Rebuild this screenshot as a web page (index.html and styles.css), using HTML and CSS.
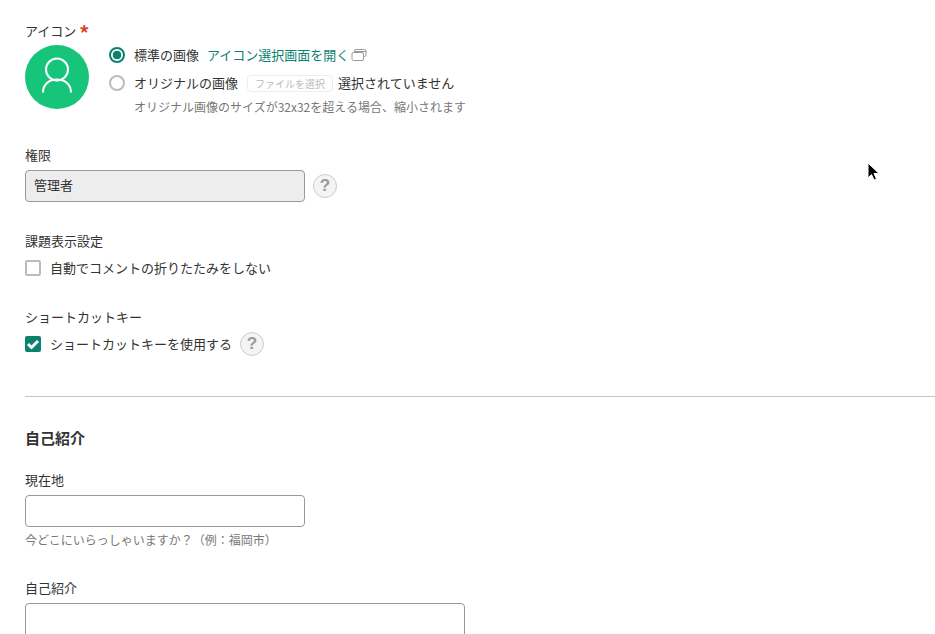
FILE: index.html
```html
<!DOCTYPE html>
<html lang="ja">
<head>
    <meta charset="UTF-8">
    <title>個人設定</title>
    <link rel="stylesheet" href="styles.css">
</head>
<body>
    <div class="settings">
        <section class="field field-icon">
            <div class="label label-icon">アイコン <span class="required">*</span></div>
            <div class="icon-row">
                <div class="avatar">
                    <svg width="64" height="64" viewBox="0 0 64 64" fill="none" stroke="#fff" stroke-width="2">
                        <circle cx="32" cy="24.5" r="11"/>
                        <path d="M18 47.5c0-8 6-13 14-13s14 5 14 13"/>
                    </svg>
                </div>
                <div class="icon-options">
                    <div class="radio-line">
                        <span class="radio checked"></span>
                        <span>標準の画像</span>
                        <a class="link">アイコン選択画面を開く</a>
                        <svg class="window-icon" width="16" height="12" viewBox="0 0 16 12" fill="none" stroke="#999">
                            <path d="M3.500 3V2A1.500 1.500 0 0 1 5 .5h8.500A1.500 1.500 0 0 1 15 2v4a1.500 1.500 0 0 1-1.500 1.500h-1"/>
                            <path d="M3.500 2.500H15"/>
                            <rect x="1" y="3.500" width="11.500" height="8" rx="1.500"/>
                        </svg>
                    </div>
                    <div class="radio-line">
                        <span class="radio"></span>
                        <span>オリジナルの画像</span>
                        <span class="file-button">ファイルを選択</span>
                        <span class="file-name">選択されていません</span>
                    </div>
                    <div class="note icon-note">オリジナル画像のサイズが32x32を超える場合、縮小されます</div>
                </div>
            </div>
        </section>

        <section class="field field-role">
            <div class="label">権限</div>
            <div class="with-help">
                <div class="input input-disabled">管理者</div>
                <span class="help">?</span>
            </div>
        </section>

        <section class="field field-issue">
            <div class="label">課題表示設定</div>
            <div class="check-line">
                <span class="checkbox"></span>
                <span>自動でコメントの折りたたみをしない</span>
            </div>
        </section>

        <section class="field field-shortcut">
            <div class="label">ショートカットキー</div>
            <div class="check-line">
                <span class="checkbox checked">
                    <svg width="16" height="16" viewBox="0 0 16 16" fill="none" stroke="#fff" stroke-width="3">
                        <path d="M3 8l3.500 3.500L13 5"/>
                    </svg>
                </span>
                <span>ショートカットキーを使用する</span>
                <span class="help">?</span>
            </div>
        </section>

        <hr class="divider">

        <h2 class="heading">自己紹介</h2>

        <section class="field field-location">
            <div class="label">現在地</div>
            <div class="input"></div>
            <div class="note location-note">今どこにいらっしゃいますか？（例：福岡市）</div>
        </section>

        <section class="field field-bio">
            <div class="label">自己紹介</div>
            <div class="textarea"></div>
        </section>
    </div>

    <svg class="cursor" width="14" height="20" viewBox="0 0 14 20">
        <path d="M1 1v15l3.500-3.500 2.500 5.500 2.500-1-2.500-5.500H12z" fill="#000" stroke="#fff" stroke-width="1"/>
    </svg>
</body>
</html>
```

FILE: styles.css
```css
* {
    margin: 0;
    padding: 0;
    box-sizing: border-box;
}

html, body {
    height: 634px;
    overflow: hidden;
}

body {
    background: #fff;
    color: #333;
    font-family: "Noto Sans CJK JP", "Noto Sans", sans-serif;
    font-size: 13px;
    line-height: 20px;
}

.settings {
    padding: 18px 0 0 25px;
}

.label {
    height: 20px;
    margin-bottom: 4px;
    line-height: 18px;
}

.label-icon {
    margin-bottom: 7px;
    line-height: 25px;
}

.required {
    color: #e5401f;
    font-size: 20px;
    line-height: 0;
    font-weight: 700;
    vertical-align: -5px;
}

.icon-row {
    display: flex;
    gap: 20px;
}

.avatar {
    width: 64px;
    height: 64px;
    border-radius: 50%;
    background: #17c57a;
}

.icon-options {
    margin-top: -4px;
}

.radio-line {
    display: flex;
    align-items: center;
    height: 28px;
}

.radio {
    width: 16px;
    height: 16px;
    margin-right: 9px;
    border: 2px solid #bbb;
    border-radius: 50%;
    background: #fff;
}

.radio.checked {
    border-color: #0b8170;
    background: radial-gradient(circle, #0b8170 0 4px, #fff 4.600px);
}

.link {
    margin-left: 8px;
    color: #0b8170;
}

.window-icon {
    margin-left: 2px;
}

.file-button {
    margin: 0 5px 0 9px;
    padding: 0 7px;
    height: 17px;
    border: 1px solid #eee;
    border-radius: 4px;
    color: #bbb;
    font-size: 10px;
    line-height: 16px;
}

.note {
    color: #777;
    font-size: 12px;
}

.icon-note {
    margin: 0 0 0 25px;
}

.field-role {
    margin-top: 29px;
}

.with-help {
    display: flex;
    align-items: center;
    gap: 8px;
}

.input {
    width: 280px;
    height: 32px;
    padding: 0 8px;
    border: 1px solid #999;
    border-radius: 4px;
    background: #fff;
    line-height: 28px;
}

.input-disabled {
    background: #ededed;
}

.help {
    display: flex;
    justify-content: center;
    align-items: center;
    width: 24px;
    height: 24px;
    border: 1px solid #ccc;
    border-radius: 50%;
    background: #f4f4f4;
    color: #999;
    font-family: "Liberation Sans", sans-serif;
    font-size: 17px;
    font-weight: 700;
}

.field-issue {
    margin-top: 30px;
}

.check-line {
    display: flex;
    align-items: center;
    height: 24px;
}

.checkbox {
    width: 16px;
    height: 16px;
    margin-right: 9px;
    border: 2px solid #bbb;
    border-radius: 2px;
    background: #fff;
}

.checkbox.checked {
    border: 0;
    background: #0b8170;
}

.checkbox svg {
    display: block;
}

.check-line .help {
    margin-left: 8px;
}

.field-shortcut {
    margin-top: 28px;
}

.divider {
    margin-top: 40px;
    border: 0;
    border-top: 1px solid #c4c4c4;
}

.heading {
    margin-top: 32px;
    color: #333;
    font-size: 15px;
    line-height: 18px;
    padding-bottom: 2px;
    font-weight: 700;
}

.field-location {
    margin-top: 22px;
}

.location-note {
    margin-top: 3px;
}

.field-bio {
    margin-top: 29px;
}

.textarea {
    width: 440px;
    height: 90px;
    border: 1px solid #999;
    border-radius: 4px;
}

.cursor {
    position: absolute;
    left: 867px;
    top: 162px;
}
```
